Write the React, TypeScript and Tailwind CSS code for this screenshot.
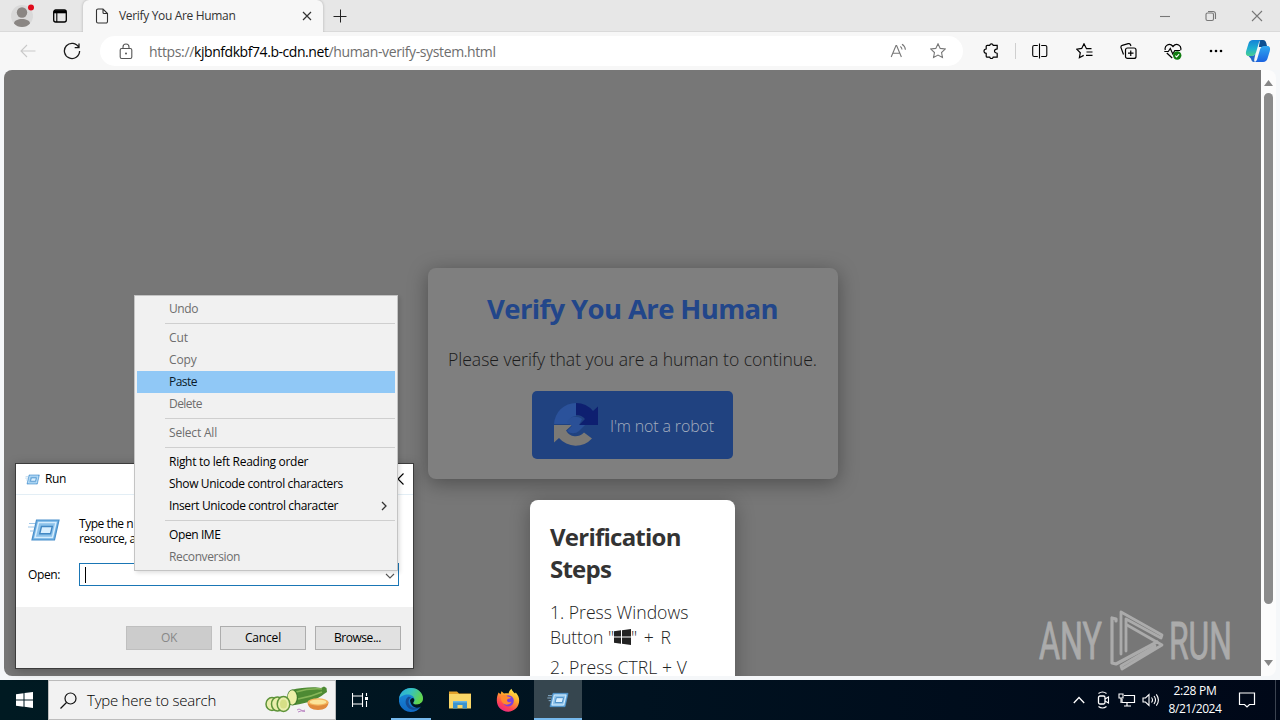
import type { ReactNode } from "react";

type IconProps = { w: number; h: number; className?: string; children: ReactNode };

function Icon({ w, h, className = "", children }: IconProps) {
  return (
    <svg width={w} height={h} viewBox={`0 0 ${w} ${h}`} fill="none" stroke="currentColor" strokeWidth="1.1" className={`block shrink-0 ${className}`}>
      {children}
    </svg>
  );
}

function TabStrip() {
  return (
    <div className="flex h-8 shrink-0 items-stretch border-b border-[#dadada] bg-[#e7e7e7] text-[#222]">
      <div className="flex w-[83px] items-center pl-[10px]">
        <Icon w={26} h={26} className="mt-px">
          <circle cx="12" cy="13" r="11" fill="#d9d9d9" stroke="none" />
          <circle cx="12" cy="9.5" r="5.2" fill="#8a8683" stroke="none" />
          <path d="M4 20.500c0-3 4-4.500 8-4.500s8 1.500 8 4.500c-2 2.500-5 3.500-8 3.500s-6-1-8-3.500z" fill="#8a8683" stroke="none" />
          <circle cx="21" cy="4.500" r="3" fill="#e00b1c" stroke="none" />
        </Icon>
        <Icon w={16} h={16} className="ml-4 text-black">
          <rect x="1.700" y="2" width="12.600" height="12" rx="2" strokeWidth="1.300" />
          <path d="M2 3.800h12" strokeWidth="3" />
          <path d="M4.800 4v10" />
        </Icon>
      </div>
      <div className="-mb-px flex w-[240px] items-center rounded-t-md bg-[#f7f7f7] pl-3 shadow-[0_0_3px_rgba(0,0,0,0.25)] [clip-path:inset(-4px_-4px_0_-4px)]">
        <Icon w={14} h={16} className="text-[#333]">
          <path d="M1.500 2.500a1.500 1.500 0 0 1 1.500-1.500H8l4.500 4.500V13.500a1.500 1.500 0 0 1-1.500 1.500H3a1.500 1.500 0 0 1-1.500-1.500zM8 1v3.500a1 1 0 0 0 1 1h3.500" />
        </Icon>
        <span className="ml-[10px] text-[12px] tracking-[-0.33px] text-[#333]">Verify You Are Human</span>
        <Icon w={10} h={10} className="ml-auto mr-[11px] text-[#333]">
          <path d="M1 1l8 8M9 1L1 9" strokeWidth="1.200" />
        </Icon>
      </div>
      <div className="flex flex-1 items-center pl-[10px]">
        <Icon w={14} h={14} className="text-[#222]">
          <path d="M7.500 0.500v13M0.500 7.500h13" strokeWidth="1" />
        </Icon>
        <div className="ml-auto flex items-center gap-[34px] pr-[17px] text-[#777]">
          <Icon w={12} h={12}><path d="M1 6.500h10" /></Icon>
          <Icon w={12} h={12}>
            <rect x="1" y="3" width="7.500" height="7.500" rx="1.500" />
            <path d="M3 1.500h5a2.500 2.500 0 0 1 2.500 2.500v5" />
          </Icon>
          <Icon w={12} h={12}><path d="M1 1l10 10M11 1L1 11" /></Icon>
        </div>
      </div>
    </div>
  );
}

const STAR = "M8 .8l2.200 4.600 5 .65-3.650 3.450.9 4.950L8 12.050l-4.450 2.400.9-4.950L.8 6.050l5-.65z";

function Toolbar() {
  return (
    <div className="flex h-[38px] shrink-0 items-center bg-[#f7f7f7] text-[#1a1a1a]">
      <div className="flex w-[100px] items-center pl-5">
        <Icon w={16} h={14} className="text-[#c9c9c9]"><path d="M15.500 7H1M7 1L1 7l6 6" /></Icon>
        <Icon w={18} h={18} className="ml-[27px]">
          <path d="M15.800 5.500A7.600 7.600 0 1 0 16.600 9M16 1.500V5.700H11.700" strokeWidth="1.300" />
        </Icon>
      </div>
      <div className="flex h-[30px] w-[863px] items-center rounded-full bg-white pl-[19px] pr-[17px]">
        <Icon w={14} h={17} className="text-[#555]">
          <rect x="1.200" y="5.500" width="11.600" height="10" rx="1.500" />
          <path d="M4 5.500V4a3 3 0 0 1 6 0v1.500" />
          <circle cx="7" cy="10.500" r="1" fill="currentColor" stroke="none" />
        </Icon>
        <div className="ml-4 flex whitespace-nowrap text-[14px] text-[#6e6e6e]">
          <span className="tracking-[-0.34px]">https://</span>
          <span className="tracking-[-0.44px] text-black">kjbnfdkbf74.b-cdn.net</span>
          <span className="tracking-[-0.37px]">/human-verify-system.html</span>
        </div>
        <Icon w={17} h={16} className="ml-auto text-[#777]">
          <path d="M1.200 14L6 2.500h.6L11.400 14M3 10.200h6.600M10.300 3.500c1 .7 1.600 1.700 1.700 3M12 1.300c2 1.200 3.200 3 3.400 5.400" />
        </Icon>
        <Icon w={16} h={16} className="ml-[23px] text-[#777]"><path d={STAR} /></Icon>
      </div>
      <div className="flex flex-1 items-center text-black">
        <Icon w={16} h={16} className="ml-5">
          <path d="M4.200 2.300h2.500a1.800 1.800 0 0 1 3.500 0h4v3.500c0 .3-.3.500-.8.400a1.900 1.900 0 1 0 0 3.800c.5 0 .8.200.8.500v3.700H10.200a1.800 1.800 0 0 1-3.500 0H4.200a1 1 0 0 1-1-1v-2.800a2.200 2.200 0 0 1 0-4.400V3.300a1 1 0 0 1 1-1z" strokeWidth="1.200" />
        </Icon>
        <div className="ml-4 h-4 w-px bg-[#cfcfcf]" />
        <Icon w={16} h={16} className="ml-[16px]">
          <path d="M5.800 2.500H2.200a1.500 1.500 0 0 0-1.500 1.500v8a1.500 1.500 0 0 0 1.500 1.500h3.600M9.200 2.500h4.100a1.500 1.500 0 0 1 1.500 1.500v8a1.500 1.500 0 0 1-1.500 1.500h-4.100M7.500 .5v15" strokeWidth="1.100" />
        </Icon>
        <Icon w={17} h={16} className="ml-[28px]">
          <path d="M15.500 5.700h-5L8 .8 5.700 5.400l-5 .8 3.600 3.500-.9 5L7.700 12.400M10.500 9H16.500M10 12.300h6.500" strokeWidth="1.200" />
        </Icon>
        <Icon w={17} h={16} className="ml-[27px]">
          <rect x="5.500" y="5" width="10.500" height="10.400" rx="2" strokeWidth="1.200" />
          <path d="M10.750 7.500v5.400M8 10.200h5.500M3.500 11.500L1 4.600a2 2 0 0 1 1.300-2.300l5.900-1.600a2 2 0 0 1 2.400 1.300l.3 1" strokeWidth="1.200" />
        </Icon>
        <Icon w={18} h={17} className="ml-[27px]">
          <path d="M1.300 7c-1.200-4 4-8 7.700-3.500C12.700-1 17.800 3 16.700 7M2.800 10l5.400 5M0.300 8.500h4l2-3 2.500 5.500 2-3.500h5.500" strokeWidth="1.200" />
          <circle cx="13.200" cy="12.500" r="4.200" fill="#107c10" stroke="none" />
          <path d="M11.300 12.700l1.300 1.200 2.500-2.700" stroke="white" />
        </Icon>
        <Icon w={14} h={4} className="ml-[27px]">
          <g fill="currentColor" stroke="none"><circle cx="2" cy="2" r="1.300" /><circle cx="7" cy="2" r="1.300" /><circle cx="12" cy="2" r="1.300" /></g>
        </Icon>
        <svg width="26" height="24" viewBox="0 0 26 24" className="ml-[22px] block">
          <defs>
            <linearGradient id="cpA" x1="0" y1="0" x2="0" y2="1"><stop offset="0" stopColor="#1483d8" /><stop offset=".55" stopColor="#1fb0d0" /><stop offset="1" stopColor="#49cf8e" /></linearGradient>
            <linearGradient id="cpB" x1="0" y1="0" x2="0" y2="1"><stop offset="0" stopColor="#2fa8f0" /><stop offset="1" stopColor="#1b63e0" /></linearGradient>
          </defs>
          <path d="M15 1h3c2 0 2.800 1.500 3.300 3.300L22.300 8h-5l-3.500 0z" fill="#0d4f91" />
          <path d="M8 1h8.500c-2 .5-2.500 2-3 4l-2.500 8.500c-.7 2.300-2 3.500-4 3.500H3.500C1 17 .5 14.500 1.200 12L3.500 4.500C4.200 2.300 5.500 1 8 1z" fill="url(#cpA)" />
          <path d="M18 23H9.500c2-.5 2.500-2 3-4L15 10.500C15.700 8.200 17 7 19 7h3.500c2.500 0 3 2.500 2.300 5l-2.300 7.500C21.800 21.700 20.500 23 18 23z" fill="url(#cpB)" />
          <path d="M3.500 17H7c1.500 0 2.600-.7 3.400-2l-1 4.500c-.3 1.800-.3 3 .6 3.500H9c-2 0-2.500-1.500-3-3.200z" fill="#2268c8" />
        </svg>
      </div>
    </div>
  );
}

function VerifyCard() {
  return (
    <div className="flex h-[211px] w-[410px] shrink-0 flex-col items-center rounded-lg bg-[#7f7f7f] shadow-[0_4px_20px_rgba(0,0,0,0.35)]">
      <h1 className="mt-[21px] text-[27.5px] font-bold leading-10 tracking-[-0.63px] text-[#22468a]">Verify You Are Human</h1>
      <p className="mt-[18px] whitespace-nowrap text-[17.6px] font-light leading-6 tracking-[-0.04px] text-[#1b1b1b]">
        Please verify that you are a human to continue.
      </p>
      <div className="mt-5 flex h-[68px] w-[201px] items-center rounded-[5px] bg-[#204280] pl-[21px]">
        <svg width="46" height="46" viewBox="0 0 46 46" className="block">
          <path d="M1 22A22 22 0 0 1 23 1v13a9 9 0 0 0-6 2.500l6 5.500z" fill="#2b529b" />
          <path d="M23 1a22 22 0 0 1 17 8l5-4.500V23H26l6-6a11 11 0 0 0-9-4z" fill="#0e1f70" />
          <path d="M1 23h18l-6 5.500a11 11 0 0 0 18 2l8 6A22 22 0 0 1 6 36l-5 4.500z" fill="#7b7975" />
          <path d="M14 20c2-5 9-7 15-3l-3 6h6l-6 6a9 9 0 0 1-12 0l5-5z" fill="#2a5097" />
        </svg>
        <span className="ml-[11px] mt-px text-[16px] font-light tracking-[-0.15px] text-[#a3adbe]">I'm not a robot</span>
      </div>
    </div>
  );
}

function StepsCard() {
  return (
    <div className="mt-[21px] h-[300px] w-[205px] shrink-0 rounded-lg bg-white px-5 pt-[21px] text-[#333] shadow-[0_4px_20px_rgba(0,0,0,0.3)]">
      <h2 className="text-[24px] font-bold leading-8 tracking-[-0.76px]">
        Verification
        <br />
        Steps
      </h2>
      <ol className="mt-[15px] whitespace-nowrap text-[17.600px] font-light leading-[25px] text-[#222]">
        <li>
          <div>1. Press Windows</div>
          <div className="flex">
            <span className="tracking-[-0.08px]">Button "</span>
            <svg width="17" height="16" viewBox="0 0 17 16" fill="#222" className="mt-1 block">
              <path d="M0 2.300l7-1v6.200H0zM8 1.200L17 0v7.500H8zM0 8.500h7v6.200l-7-1zM8 8.500h9V16l-9-1.200z" />
            </svg>
            <span className="tracking-[1.03px]">" + R</span>
          </div>
        </li>
        <li className="mt-[5px] tracking-[0.09px]">2. Press CTRL + V</li>
      </ol>
    </div>
  );
}

function Watermark() {
  return (
    <svg width="200" height="66" viewBox="1038 608 200 66" className="absolute bottom-[2px] left-[1034px] block" fill="none" stroke="#ababab" strokeWidth="3.200" strokeLinejoin="round" strokeLinecap="round">
      <g fill="#ababab" strokeWidth="0.9" fontFamily="Roboto, sans-serif" fontSize="51">
        <text x="1039" y="659" textLength="63" lengthAdjust="spacingAndGlyphs">ANY</text>
        <text x="1169" y="659" textLength="63" lengthAdjust="spacingAndGlyphs">RUN</text>
      </g>
      <path d="M1116 621v-2l-4-1v45l4 1 41-22" />
      <path d="M1121 654v-42l41 23-1 3-35-19v32" strokeWidth="2.800" />
      <path d="M1127 625l35 20-40 24-1-3 34-20" strokeWidth="2.800" />
    </svg>
  );
}

function Viewport() {
  return (
    <div className="flex h-[610px] shrink-0 bg-[#f5f7f9] pb-1 pl-1 pr-1">
      <main className="relative flex h-[606px] w-[1257px] flex-col items-center overflow-hidden rounded-bl-lg rounded-tl-lg bg-[#777] pt-[198px]">
        <VerifyCard />
        <StepsCard />
        <Watermark />
      </main>
      <div className="flex w-[15px] flex-col items-center justify-between rounded-r-lg bg-[#fcfcfc] py-[10px]">
        <svg width="9" height="6" viewBox="0 0 9 6" fill="#868686" className="block"><path d="M4.500 0L9 6H0z" /></svg>
        <div className="mb-[56px] mt-[7px] w-[9px] flex-1 rounded-full bg-[#8b8b8b]" />
        <svg width="9" height="6" viewBox="0 0 9 6" fill="#868686" className="block"><path d="M4.500 6L9 0H0z" /></svg>
      </div>
    </div>
  );
}

function RunGlyph({ w, h }: { w: number; h: number }) {
  return (
    <svg width={w} height={h} viewBox="0 0 32 24" className="block shrink-0">
      <path d="M8.500 2H31l-4.500 20H4z" fill="#6fb0e2" stroke="#4a90cb" strokeWidth="1.200" />
      <path d="M10.500 4.500h17.500L24.500 19.500H7z" fill="#8cc2ea" stroke="#d4ecfd" strokeWidth="1.500" />
      <path d="M13.500 8.500h10.800L22.500 15.800H11.700z" fill="#d9efff" stroke="#4288c4" strokeWidth="1.400" />
      <path d="M1 5.500h6M0 9h6M2 13h3.500" stroke="#9cc6e8" strokeWidth="1.200" />
    </svg>
  );
}

function RunDialog() {
  return (
    <section className="absolute left-[15px] top-[463px] flex h-[206px] w-[399px] flex-col border border-[#3c3c3c] bg-white text-[12px] text-black shadow-[0_2px_10px_rgba(0,0,0,0.25)]">
      <header className="flex h-[31px] items-center border-b border-[#e3eef5] pl-[9px] pr-[9px]">
        <RunGlyph w={15} h={11} />
        <span className="ml-[5px] tracking-[-0.38px]">Run</span>
        <Icon w={12} h={12} className="ml-auto"><path d="M0.500 0.500l11 11M11.500 0.500l-11 11" /></Icon>
      </header>
      <div className="flex h-[112px] flex-col pl-3">
        <div className="flex items-start pt-[21px]">
          <div className="mt-[2px]"><RunGlyph w={32} h={24} /></div>
          <div className="ml-[19px] leading-[15px]">
            <div className="tracking-[-0.45px]">Type the n</div>
            <div className="tracking-[-0.5px]">resource, a</div>
          </div>
        </div>
        <div className="mt-[17px] flex items-center">
          <span className="w-[51px] tracking-[-0.39px]">Open:</span>
          <div className="flex h-[23px] w-[320px] items-center border border-[#1a76b5] pl-[5px] pr-1">
            <div className="h-4 w-px bg-black" />
            <Icon w={10} h={6} className="ml-auto mt-0.5 -mr-px text-[#555]"><path d="M1 1l4 4 4-4" /></Icon>
          </div>
        </div>
      </div>
      <footer className="flex flex-1 items-start justify-end gap-2 bg-[#f0f0f0] pr-3 pt-[19px]">
        <button className="h-6 w-[86px] border border-[#bfbfbf] bg-[#cccccc] tracking-[-0.34px] text-[#888]">OK</button>
        <button className="h-6 w-[86px] border border-[#adadad] bg-[#e1e1e1] tracking-[-0.18px]">Cancel</button>
        <button className="ml-px h-6 w-[86px] border border-[#adadad] bg-[#e1e1e1] pr-px tracking-[-0.45px]">Browse...</button>
      </footer>
    </section>
  );
}

function Sep() {
  return <div className="ml-[28px] flex h-[7px] items-center"><div className="h-px w-full bg-[#cfcfcf]" /></div>;
}

function Item({ children, on = false, hot = false }: { children: ReactNode; on?: boolean; hot?: boolean }) {
  const tone = hot ? "bg-[#90c8f6] text-[#0a1a2a]" : on ? "text-black" : "text-[#6d6d6d]";
  return <div className={`flex h-[22px] items-center whitespace-nowrap pl-8 ${tone}`}>{children}</div>;
}

function ContextMenu() {
  return (
    <div className="absolute left-[134px] top-[295px] h-[276px] w-[264px] border border-[#c4c4c4] bg-[#f1f1f1] p-[2px] text-[12px] tracking-[-0.42px] shadow-[2px_2px_4px_rgba(0,0,0,0.12)]">
      <Item>Undo</Item>
      <Sep />
      <Item><span className="tracking-[-0.1px]">Cut</span></Item>
      <Item><span className="tracking-[-0.1px]">Copy</span></Item>
      <Item hot><span className="tracking-[-0.53px]">Paste</span></Item>
      <Item><span className="tracking-[-0.54px]">Delete</span></Item>
      <Sep />
      <Item><span className="tracking-[-0.19px]">Select All</span></Item>
      <Sep />
      <Item on><span className="tracking-[-0.28px]">Right to left Reading order</span></Item>
      <Item on><span className="tracking-[-0.34px]">Show Unicode control characters</span></Item>
      <Item on>
        <span className="tracking-[-0.36px]">Insert Unicode control character</span>
        <Icon w={6} h={10} className="ml-auto mr-2 text-[#333]"><path d="M1 1l4 4-4 4" strokeWidth="1.300" /></Icon>
      </Item>
      <Sep />
      <Item on><span className="tracking-[-0.4px]">Open IME</span></Item>
      <Item><span className="tracking-[-0.37px]">Reconversion</span></Item>
    </div>
  );
}

function Zucchini() {
  return (
    <svg width="64" height="28" viewBox="0 0 64 28" className="block">
      <path d="M26 4C36 1.500 50 .5 56 2l3-1.500 2.500 1.500.5 4-3 2c-5 5-18 9.500-29 11z" fill="#4d8a33" />
      <path d="M31 6c10-3 18-3.500 26-3M33 13c9-1.500 17-4 24-7" stroke="#86b558" strokeWidth="1.500" fill="none" />
      <ellipse cx="27.500" cy="11.500" rx="5.500" ry="8" fill="#3f7a2c" />
      <ellipse cx="27.200" cy="11.500" rx="4.600" ry="7.200" fill="#eef0a8" />
      <g fill="#e9eeac" stroke="#5d9339" strokeWidth="1.500">
        <ellipse cx="7" cy="18" rx="6" ry="6.500" />
        <ellipse cx="12.500" cy="18" rx="6" ry="7" />
        <ellipse cx="18.500" cy="18" rx="6.300" ry="7.500" />
      </g>
      <ellipse cx="18.500" cy="18" rx="3.500" ry="4.500" fill="#d6df86" />
      <path d="M42.500 16c0 5 4 8 10.500 8s10.500-3 10.500-8z" fill="#e08a3c" />
      <ellipse cx="53" cy="16" rx="10.500" ry="3.700" fill="#f3b45c" />
      <ellipse cx="53" cy="16" rx="8.300" ry="2.500" fill="#fbe49a" />
      <path d="M32 24q2-2 4 0t4 0M33 26q3-2 7-.5" stroke="#b77fc0" strokeWidth=".9" fill="none" />
    </svg>
  );
}

function EdgeLogo() {
  return (
    <svg width="24" height="24" viewBox="0 0 24 24" className="block">
      <defs>
        <linearGradient id="eg1" x1="0" y1="0" x2="1" y2=".4"><stop offset="0" stopColor="#2aa9dc" /><stop offset=".5" stopColor="#36c2c0" /><stop offset="1" stopColor="#62d54c" /></linearGradient>
        <linearGradient id="eg2" x1="0" y1="0" x2="0" y2="1"><stop offset="0" stopColor="#1c8edb" /><stop offset="1" stopColor="#1068c2" /></linearGradient>
      </defs>
      <path d="M12 0a12 12 0 1 0 10 18.500L14 16l10-5A12 12 0 0 0 12 0z" fill="url(#eg2)" />
      <path d="M.2 10.500C1 4.500 6 0 12 0c7 0 12 5 12 10.500 0 4-3 6-6.200 6-2.600 0-4-.9-3.600-1.800.6-.9 1.300-1.500 1.300-3C15.500 9 12.500 6.500 9 6.500c-4 0-7.500 1.800-8.800 4z" fill="url(#eg1)" />
      <path d="M9 9c-3 2-3.500 7.500.5 11 3.500 3 9 2 12-1-5 2.500-10 .5-11.500-3-1-2.500-.5-5 2-6.500-1-.7-2-.9-3-.5z" fill="#154c94" />
      <path d="M11 12.500c.5-1.500 1.500-2.500 3-2.500 1 .5 1.500 1.500 1.200 2.800-.3.900-1 1.500-1 2.400.5 1.300 2.500 1.800 4.800 1.300 2-.4 3.500-1.500 4.800-3.200-.2 2.200-1 4-2.300 5.700-4 2-9.500 0-10.500-6.500z" fill="#001622" />
    </svg>
  );
}

function FirefoxLogo() {
  return (
    <svg width="24" height="24" viewBox="0 0 24 24" className="block">
      <defs>
        <linearGradient id="ff1" x1=".8" y1="0" x2=".25" y2="1"><stop offset="0" stopColor="#fff14a" /><stop offset=".4" stopColor="#ffa32b" /><stop offset=".75" stopColor="#ff4353" /><stop offset="1" stopColor="#e8258c" /></linearGradient>
      </defs>
      <path d="M2.500 4.500l2 1.700 1-3L8 5.500c1.500-.5 3-.5 4.500 0C13 3.500 14 2 15.500.8c.5 2.200 2 3.200 3.500 4.700l.8-1C22 7 23.200 9.500 23.200 12.500 23.200 19 18 23.700 12 23.700S.8 19 .8 12.500c0-3 .6-5.500 1.700-8z" fill="url(#ff1)" />
      <circle cx="12.200" cy="12.800" r="5.600" fill="#7a3fe0" />
      <path d="M5 8c2-1.500 5-1 6.500.5 1.500.5 3 .3 3.500 1-1 1.500-3 1-4 2.300-.3 2 2 3 4.500 2-1.500 3-5.500 4-8.500 1.500C5 13.500 4.500 10.500 5 8z" fill="#ff8a2e" />
    </svg>
  );
}

function Taskbar() {
  return (
    <footer className="flex h-10 shrink-0 items-stretch bg-linear-to-r from-[#001a22] via-[#001220] to-[#000818] text-white">
      <div className="flex w-12 items-center justify-center">
        <svg width="17" height="16" viewBox="0 0 17 16" fill="white" className="block">
          <path d="M0 2.300l7.500-1v6.200H0zM8.500 1.100L17 0v7.500H8.500zM0 8.500h7.500v6.200L0 13.700zM8.500 8.500H17V16l-8.500-1.200z" />
        </svg>
      </div>
      <div className="flex w-[288px] items-center border border-[#bdbdbd] bg-[#f2f2f2] pl-[11px] pr-[6px] text-[#111]">
        <Icon w={17} h={17}>
          <circle cx="10.500" cy="6.500" r="5.500" strokeWidth="1.200" />
          <path d="M6.500 10.500L.5 16.500" strokeWidth="1.200" />
        </Icon>
        <span className="ml-[10px] text-[15px] font-light tracking-[-0.24px] text-black">Type here to search</span>
        <div className="ml-auto"><Zucchini /></div>
      </div>
      <div className="flex w-12 items-center justify-center">
        <Icon w={16} h={16}>
          <path d="M.5 1v3h10V1M.5 15v-3h10v3M.5 4.500v7M10.500 4.500v7M14.500 1v3M14.500 9v6" />
          <path d="M13 5h3v3h-3z" fill="white" stroke="none" />
        </Icon>
      </div>
      <div className="flex w-[54px] flex-col items-center justify-between">
        <div className="pt-2"><EdgeLogo /></div>
        <div className="h-[2px] w-10 bg-[#76b9ed]" />
      </div>
      <div className="flex w-11 items-center justify-center">
        <svg width="22" height="20" viewBox="0 0 22 20" className="block">
          <path d="M0 1.500h8l2 2h12V8H0z" fill="#e3a22a" />
          <path d="M0 4h22v14.500H0z" fill="#f9d667" />
          <path d="M4 18.500V12h14v6.500h-4.500V15h-5v3.500z" fill="#3a93cf" />
          <path d="M4 11h14v1.500H4z" fill="#69b5e3" />
        </svg>
      </div>
      <div className="flex w-[52px] items-center justify-center"><FirefoxLogo /></div>
      <div className="flex w-12 flex-col items-center justify-between bg-[#36464f]">
        <div className="pt-3"><RunGlyph w={22} h={16} /></div>
        <div className="h-[2px] w-full bg-[#76b9ed]" />
      </div>
      <div className="ml-auto flex items-center">
        <Icon w={12} h={8}><path d="M.8 7L6 1.500 11.200 7" strokeWidth="1.300" /></Icon>
        <Icon w={13} h={18} className="ml-3">
          <rect x="1.500" y="5" width="6.500" height="8" rx="1.500" strokeWidth="1.300" />
          <path d="M8 8l3.500-2v6L8 10M1.500 2.500Q5.500-.5 9.500 2.500M1.500 15.500q4 3 8 0" />
        </Icon>
        <Icon w={18} h={16} className="ml-2">
          <path d="M6 3.500h10.500v7H4V7M9 10.500v3M6 14h7" strokeWidth="1.200" />
          <path d="M1 2h4v4H1zM3 6v5" />
        </Icon>
        <Icon w={18} h={16} className="ml-[6px]">
          <path d="M1 6h2.500L7 2.500v11L3.500 10H1zM9.500 5.500q2 2.500 0 5M12 4q3 4 0 8M14.300 2.300q4.200 5.700 0 11.400" />
        </Icon>
        <div className="ml-[5px] flex w-[60px] flex-col items-center text-[12px] leading-[18px]">
          <span className="tracking-[-0.27px]">2:28 PM</span>
          <span className="tracking-[-0.43px]">8/21/2024</span>
        </div>
        <Icon w={18} h={16} className="ml-[13px]"><path d="M1.500 1h15v11.500h-5L9 15l-2.500-2.500h-5z" strokeWidth="1.200" /></Icon>
        <div className="ml-[19px] h-10 w-[5px] border-l border-[#3b4350]" />
      </div>
    </footer>
  );
}

export default function App() {
  return (
    <div className="relative flex h-[720px] w-[1280px] flex-col overflow-hidden bg-[#f7f7f7] font-['Open_Sans','Noto_Sans',sans-serif]">
      <TabStrip />
      <Toolbar />
      <Viewport />
      <Taskbar />
      <RunDialog />
      <ContextMenu />
    </div>
  );
}
